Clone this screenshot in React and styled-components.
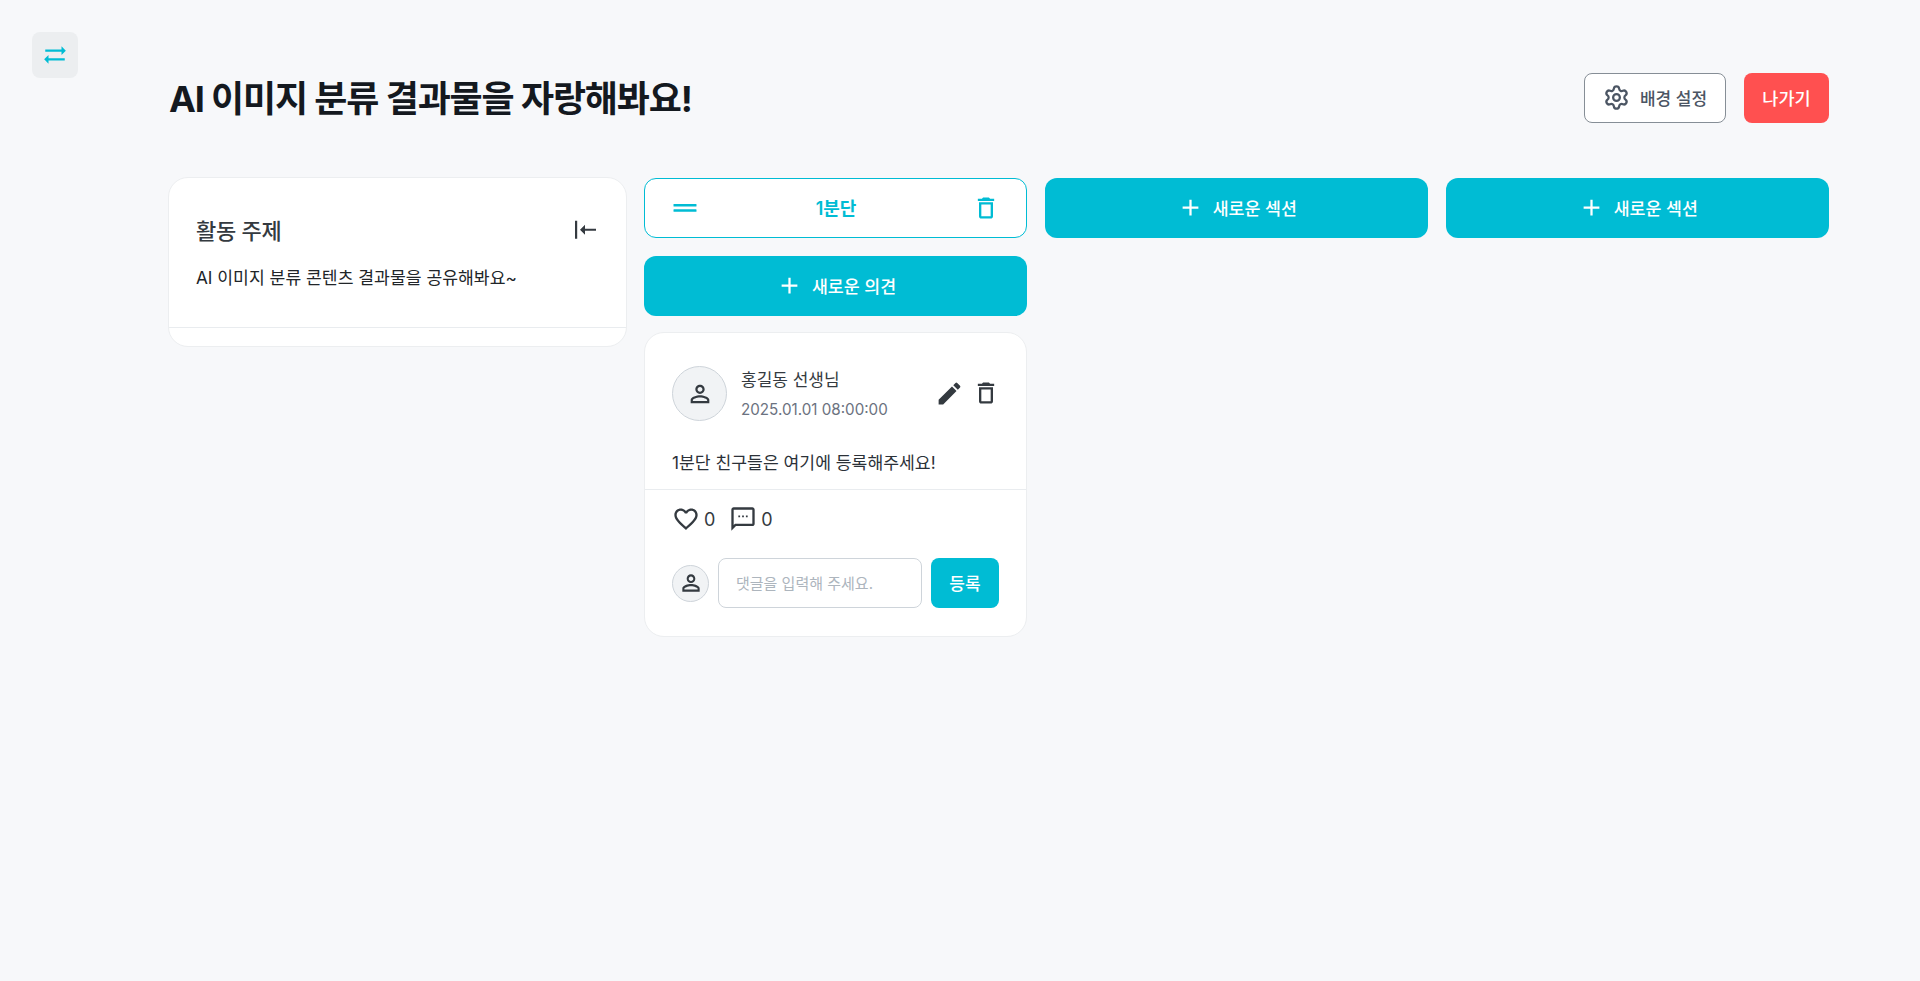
import React from 'react';
import styled, { createGlobalStyle } from 'styled-components';
import { Settings } from 'lucide-react';

const Global = createGlobalStyle`
  * { box-sizing: border-box; }
  html, body { margin: 0; padding: 0; background: #f7f8fa; }
  body { font-family: Inter, "Noto Sans CJK KR", sans-serif; color: #1f2937; }
  button, input { font-family: inherit; }
`;

const TEAL = '#00bcd4';

const Page = styled.div`
  display: flex;
  min-height: 981px;
`;
const Rail = styled.aside`
  flex: 0 0 168px;
  padding: 32px;
`;
const RailButton = styled.button`
  width: 46px;
  height: 46px;
  padding: 0;
  border: 0;
  border-radius: 8px;
  background: #eceef0;
  color: ${TEAL};
  display: flex;
  align-items: center;
  justify-content: center;
`;
const Main = styled.main`
  flex: 1;
  padding: 73px 91px 0 0;
`;
const Header = styled.header`
  display: flex;
  align-items: center;
  justify-content: space-between;
  height: 50px;
  margin-bottom: 55px;
`;
const Title = styled.h1`
  margin: 2px 0 0 1px;
  font-size: 36px;
  line-height: 50px;
  font-weight: 700;
  letter-spacing: -1.15px;
  color: #14191f;
`;
const HeaderActions = styled.div`
  display: flex;
  gap: 18px;
`;
const OutlineButton = styled.button`
  height: 50px;
  width: 142px;
  border: 1px solid #868e96;
  border-radius: 8px;
  background: #fff;
  color: #4b5563;
  font-size: 17px;
  font-weight: 500;
  display: flex;
  align-items: center;
  justify-content: center;
  gap: 10px;
  padding: 0 0 1px;
`;
const DangerButton = styled.button`
  height: 50px;
  width: 85px;
  border: 0;
  border-radius: 8px;
  background: #ff5050;
  color: #fff;
  font-size: 17.5px;
  font-weight: 500;
  padding: 0 0 2px;
`;
const Board = styled.div`
  display: grid;
  grid-template-columns: 458.5px 383px 383.5px 383.5px;
  column-gap: 17.5px;
  align-items: start;
`;
const TopicPanel = styled.section`
  background: #fff;
  border: 1px solid #eceef0;
  border-radius: 20px;
  height: 170px;
  margin-top: -1px;
  overflow: hidden;
`;
const TopicBody = styled.div`
  height: 150px;
  padding: 36px 29px 0 27px;
  border-bottom: 1px solid #e9ecef;
`;
const TopicHead = styled.div`
  display: flex;
  align-items: center;
  justify-content: space-between;
  height: 30px;
  margin-bottom: 20px;
`;
const TopicTitle = styled.h2`
  margin: 0;
  font-size: 22px;
  font-weight: 500;
  letter-spacing: -0.3px;
  color: #343a40;
`;
const TopicText = styled.p`
  margin: 0;
  font-size: 17.2px;
  line-height: 28px;
  color: #212529;
`;
const IconBtn = styled.button`
  border: 0;
  background: none;
  padding: 0;
  display: flex;
  color: inherit;
`;
const Column = styled.div`
  display: flex;
  flex-direction: column;
  gap: 18px;
`;
const SectionHead = styled.div`
  height: 60px;
  border: 1.5px solid ${TEAL};
  border-radius: 12px;
  background: #fff;
  color: ${TEAL};
  display: flex;
  align-items: center;
  justify-content: space-between;
  padding: 0 26px 0 27px;
`;
const SectionName = styled.span`
  font-size: 18px;
  font-weight: 600;
  letter-spacing: -0.1px;
  margin-top: -2px;
`;
const PrimaryWide = styled.button`
  height: 60px;
  width: 100%;
  border: 0;
  border-radius: 12px;
  background: ${TEAL};
  color: #fff;
  font-size: 17.3px;
  font-weight: 500;
  display: flex;
  align-items: center;
  justify-content: center;
  gap: 9px;
  padding: 0 0 2px 1px;
`;
const Card = styled.article`
  margin-top: -2px;
  background: #fff;
  border: 1px solid #eceef0;
  border-radius: 20px;
  height: 305px;
  overflow: hidden;
`;
const CardTop = styled.div`
  height: 157px;
  padding: 33px 26px 0 27px;
  border-bottom: 1px solid #e9ecef;
`;
const AuthorRow = styled.div`
  display: flex;
  align-items: center;
  gap: 14px;
  height: 55px;
  margin-bottom: 30px;
`;
const Avatar = styled.div`
  flex: none;
  width: ${p => p.$size}px;
  height: ${p => p.$size}px;
  border-radius: 50%;
  border: 1px solid #ced4da;
  background: #f1f3f5;
  color: #343a40;
  display: flex;
  align-items: center;
  justify-content: center;
`;
const Author = styled.div`
  flex: 1;
  display: flex;
  flex-direction: column;
  gap: 10px;
  padding-top: 3px;
`;
const AuthorName = styled.span`
  font-size: 17px;
  line-height: 20px;
  color: #343a40;
`;
const AuthorDate = styled.span`
  font-size: 15.2px;
  line-height: 20px;
  color: #6b7280;
`;
const CardActions = styled.div`
  display: flex;
  gap: 8px;
  color: #343a40;
`;
const CardText = styled.p`
  margin: 0;
  font-size: 17.2px;
  line-height: 24px;
  color: #2b3138;
`;
const CardBottom = styled.div`
  padding: 15px 27px 0;
`;
const Stats = styled.div`
  display: flex;
  align-items: center;
  gap: 14px;
  height: 28px;
  margin-bottom: 25px;
  color: #343a40;
`;
const Stat = styled.span`
  display: flex;
  align-items: center;
  gap: 4px;
  font-size: 18px;
`;
const CommentRow = styled.form`
  display: flex;
  align-items: center;
  gap: 9px;
`;
const CommentInput = styled.input`
  width: 204px;
  height: 50px;
  border: 1.5px solid #ced4da;
  border-radius: 8px;
  background: #fff;
  padding: 0 17px;
  font-size: 15px;
  outline: none;
  &::placeholder { color: #adb5bd; opacity: 1; }
`;
const SubmitButton = styled.button`
  width: 68px;
  height: 50px;
  border: 0;
  border-radius: 8px;
  background: ${TEAL};
  color: #fff;
  font-size: 17px;
  font-weight: 500;
  padding: 0 0 1px;
`;

const Icon = ({ d, size = 24, color = 'currentColor' }) => (
  <svg width={size} height={size} viewBox="0 0 24 24" fill={color} aria-hidden="true"><path d={d} /></svg>
);
const P = {
  swap: 'M18 12l4-4-4-4v3H3v2h15zM6 12l-4 4 4 4v-3h15v-2H6z',
  trash: 'M6 19c0 1.1.9 2 2 2h8c1.1 0 2-.9 2-2V7H6v12zM8 9h8v10H8V9zm7.5-5l-1-1h-5l-1 1H5v2h14V4h-3.5z',
  edit: 'M3 17.25V21h3.75L17.81 9.94l-3.75-3.75L3 17.25zM20.71 7.04c.39-.39.39-1.02 0-1.41l-2.34-2.34a.9959.9959 0 0 0-1.41 0l-1.83 1.83 3.75 3.75 1.83-1.83z',
  person: 'M12 5.9c1.16 0 2.1.94 2.1 2.1s-.94 2.1-2.1 2.1S9.9 9.16 9.9 8s.94-2.1 2.1-2.1m0 9c2.97 0 6.1 1.46 6.1 2.1v1.1H5.9V17c0-.64 3.13-2.1 6.1-2.1M12 4C9.79 4 8 5.79 8 8s1.79 4 4 4 4-1.79 4-4-1.79-4-4-4zm0 9c-2.67 0-8 1.34-8 4v3h16v-3c0-2.66-5.33-4-8-4z',
  heart: 'M16.5 3c-1.74 0-3.41.81-4.5 2.09C10.91 3.81 9.24 3 7.5 3 4.42 3 2 5.42 2 8.5c0 3.78 3.4 6.86 8.55 11.54L12 21.35l1.45-1.32C18.6 15.36 22 12.28 22 8.5 22 5.42 19.58 3 16.5 3zm-4.4 15.55l-.1.1-.1-.1C7.14 14.24 4 11.39 4 8.5 4 6.5 5.5 5 7.5 5c1.54 0 3.04.99 3.57 2.36h1.87C13.46 5.99 14.96 5 16.5 5c2 0 3.5 1.5 3.5 3.5 0 2.89-3.14 5.74-7.9 10.05z',
  comment: 'M20 2H4c-1.1 0-1.99.9-1.99 2L2 22l4-4h14c1.1 0 2-.9 2-2V4c0-1.1-.9-2-2-2zm0 14H5.17L4 17.17V4h16v12zM8 9h1.5v1.5H8zm3.25 0h1.5v1.5h-1.5zm3.25 0H16v1.5h-1.5z',
  plus: 'M19 13h-6v6h-2v-6H5v-2h6V5h2v6h6v2z',
  collapse: 'M2 3.8h2.2v18H2zM7 12.8l5-5v4h11v2H12v4z',
};
const DragIcon = () => (
  <svg width="28" height="10" viewBox="0 0 28 10" fill="currentColor" aria-hidden="true">
    <rect x="1.5" y="1" width="23" height="2.6" rx="0.6" />
    <rect x="1.5" y="6.2" width="23" height="2.6" rx="0.6" />
  </svg>
);

const NewButton = ({ label }) => (
  <PrimaryWide type="button"><Icon d={P.plus} size={27} />{label}</PrimaryWide>
);

export default function App() {
  return (
    <Page>
      <Global />
      <Rail>
        <RailButton type="button" aria-label="전환"><Icon d={P.swap} size={26} /></RailButton>
      </Rail>
      <Main>
        <Header>
          <Title>AI 이미지 분류 결과물을 자랑해봐요!</Title>
          <HeaderActions>
            <OutlineButton type="button"><Settings size={27} strokeWidth={2} />배경 설정</OutlineButton>
            <DangerButton type="button">나가기</DangerButton>
          </HeaderActions>
        </Header>
        <Board>
          <TopicPanel>
            <TopicBody>
              <TopicHead>
                <TopicTitle>활동 주제</TopicTitle>
                <IconBtn type="button" aria-label="접기"><Icon d={P.collapse} size={24} color="#343a40" /></IconBtn>
              </TopicHead>
              <TopicText>AI 이미지 분류 콘텐츠 결과물을 공유해봐요~</TopicText>
            </TopicBody>
          </TopicPanel>
          <Column>
            <SectionHead>
              <IconBtn type="button" aria-label="이동"><DragIcon /></IconBtn>
              <SectionName>1분단</SectionName>
              <IconBtn type="button" aria-label="삭제"><Icon d={P.trash} size={28} /></IconBtn>
            </SectionHead>
            <NewButton label="새로운 의견" />
            <Card>
              <CardTop>
                <AuthorRow>
                  <Avatar $size={55}><Icon d={P.person} size={28} /></Avatar>
                  <Author>
                    <AuthorName>홍길동 선생님</AuthorName>
                    <AuthorDate>2025.01.01 08:00:00</AuthorDate>
                  </Author>
                  <CardActions>
                    <IconBtn type="button" aria-label="수정"><Icon d={P.edit} size={29} /></IconBtn>
                    <IconBtn type="button" aria-label="삭제"><Icon d={P.trash} size={28} /></IconBtn>
                  </CardActions>
                </AuthorRow>
                <CardText>1분단 친구들은 여기에 등록해주세요!</CardText>
              </CardTop>
              <CardBottom>
                <Stats>
                  <Stat><Icon d={P.heart} size={28} />0</Stat>
                  <Stat><Icon d={P.comment} size={28} />0</Stat>
                </Stats>
                <CommentRow>
                  <Avatar $size={37}><Icon d={P.person} size={26} /></Avatar>
                  <CommentInput placeholder="댓글을 입력해 주세요." />
                  <SubmitButton type="button">등록</SubmitButton>
                </CommentRow>
              </CardBottom>
            </Card>
          </Column>
          <Column><NewButton label="새로운 섹션" /></Column>
          <Column><NewButton label="새로운 섹션" /></Column>
        </Board>
      </Main>
    </Page>
  );
}
